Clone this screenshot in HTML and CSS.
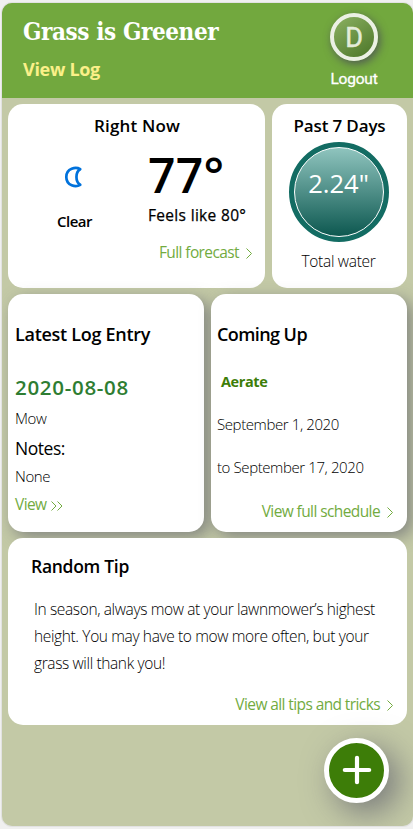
FILE: index.html
```html
<!DOCTYPE html>
<html lang="en">
<head>
<meta charset="utf-8">
<title>Grass is Greener</title>
<link rel="stylesheet" href="styles.css">
</head>
<body>
<div class="app">
  <header class="header">
    <div>
      <h1 class="brand">Grass is Greener</h1>
      <a class="view-log">View Log</a>
    </div>
    <div class="account">
      <div class="avatar">D</div>
      <a class="logout">Logout</a>
    </div>
  </header>
  <main class="main">
    <div class="row row-weather">
      <section class="card now">
        <h2 class="title title-sm">Right Now</h2>
        <div class="now-body">
          <div class="sky">
            <svg class="moon" width="18" height="22" viewBox="0 0 18 22"><path d="M16.200 3.200C12 .600 2.300 2 2.300 11s9.700 10.400 13.900 7.800C11.200 16 11.200 6 16.200 3.200Z" fill="none" stroke="#0072dc" stroke-width="2.700" stroke-linejoin="round"/></svg>
            <p class="condition">Clear</p>
          </div>
          <div class="temps">
            <p class="temp">77°</p>
            <p class="feels">Feels like 80°</p>
          </div>
        </div>
        <a class="link link-right">Full forecast<svg class="chev" width="6" height="11" viewBox="0 0 6 11"><path d="M.5 .5 5.500 5.500.5 10.500"/></svg></a>
      </section>
      <section class="card water">
        <h2 class="title title-past">Past 7 Days</h2>
        <div class="gauge"><div class="gauge-inner">2.24"</div></div>
        <p class="total">Total water</p>
      </section>
    </div>
    <div class="row row-log">
      <section class="card raised latest">
        <h2 class="title title-tight">Latest Log Entry</h2>
        <h3 class="date">2020-08-08</h3>
        <p class="text mow">Mow</p>
        <h4 class="notes">Notes:</h4>
        <p class="text none">None</p>
        <a class="link view">View<svg class="chev" width="12" height="10" viewBox="0 0 12 10"><path d="M.5 .5 5 5 .5 9.500M6.500 .5 11 5 6.500 9.500"/></svg></a>
      </section>
      <section class="card raised coming">
        <h2 class="title title-coming">Coming Up</h2>
        <h3 class="task">Aerate</h3>
        <p class="text when">September 1, 2020</p>
        <p class="text when">to September 17, 2020</p>
        <a class="link link-right schedule">View full schedule<svg class="chev" width="6" height="11" viewBox="0 0 6 11"><path d="M.5 .5 5.500 5.500.5 10.500"/></svg></a>
      </section>
    </div>
    <section class="card tip">
      <h2 class="title title-tip">Random Tip</h2>
      <p class="tip-text">In season, always mow at your lawnmower’s highest<br>height. You may have to mow more often, but your<br>grass will thank you!</p>
      <a class="link link-right tricks">View all tips and tricks<svg class="chev" width="6" height="11" viewBox="0 0 6 11"><path d="M.5 .5 5.500 5.500.5 10.500"/></svg></a>
    </section>
  </main>
  <button class="fab" aria-label="Add"><svg width="30" height="30" viewBox="0 0 30 30"><path d="M15 2.800v24.400M2.800 15h24.400" stroke="#fff" stroke-width="4.200" stroke-linecap="round"/></svg></button>
</div>
</body>
</html>
```
FILE: styles.css
```css
* { box-sizing: border-box; margin: 0; padding: 0; }
body {
  background: #f0f0f0;
  padding: 2px 0 0 1px;
  font-family: "Open Sans", "Noto Sans", sans-serif;
  color: #000;
  height: 829px;
  overflow: hidden;
}
.app {
  height: 823px;
  margin: 1px 0 0 1px;
  background: #c3c9a6;
  border-radius: 10px;
  overflow: hidden;
  box-shadow: 0 0 0 1px #e2e2e2;
}
.header {
  height: 95px;
  background: #72a83e;
  display: flex;
  justify-content: space-between;
  padding: 14px 29px 0 21px;
}
.brand {
  font: bold 24px/30px "DejaVu Serif Condensed", "DejaVu Serif", serif;
  letter-spacing: -0.4px;
  color: #fff;
}
.view-log {
  display: block;
  margin-top: 12px;
  font-size: 18px;
  line-height: 20px;
  font-weight: 700;
  letter-spacing: -0.3px;
  color: #fbf089;
}
.account {
  display: flex;
  flex-direction: column;
  align-items: center;
  width: 60px;
  margin: -4px 0 0;
}
.avatar {
  width: 48px;
  height: 48px;
  flex: none;
  border-radius: 50%;
  border: 4px solid #ebf0e4;
  background: linear-gradient(145deg, #8bb162, #4b7527);
  box-shadow: 2px 3px 9px rgba(70, 65, 90, .75);
  color: #e3ecd9;
  font: 400 27px/42px Roboto, sans-serif;
  -webkit-text-stroke: .5px #e3ecd9;
  text-align: center;
}
.logout {
  margin-top: 8px;
  font: 400 15.5px/20px Roboto, sans-serif;
  -webkit-text-stroke: .3px #fff;
  letter-spacing: -0.2px;
  color: #fff;
}
.main { padding: 6px 6px 0; display: flex; flex-direction: column; gap: 6px; }
.row { display: grid; gap: 7px; }
.row-weather { grid-template-columns: 257px 135px; height: 184px; }
.row-log { grid-template-columns: 196px 196px; height: 238px; }
.card { background: #fff; border-radius: 15px; }
.raised { box-shadow: 5px 5px 15px rgba(90, 90, 105, .6); }
.title { font-size: 18px; line-height: 20px; font-weight: 600; }
.title-sm { font-size: 17px; letter-spacing: .16px; text-align: center; }
.title-past { font-size: 17px; letter-spacing: -.14px; }
.title-tight { letter-spacing: -.29px; }
.title-coming { letter-spacing: -.58px; }
.title-tip { font-size: 17.5px; letter-spacing: -.29px; }

.now { padding: 12px 13px 0 0; }
.now .title { padding-left: 14px; }
.now-body { display: grid; grid-template-columns: 140px 1fr; height: 95px; }
.sky { display: flex; flex-direction: column; align-items: center; width: 133px; padding-top: 30px; }
.moon { display: block; margin-right: 3px; }
.condition { margin-top: 23px; font-size: 15px; line-height: 20px; font-weight: 600; letter-spacing: -.5px; }
.temps { padding-top: 14px; }
.temp { font-size: 48px; line-height: 50px; font-weight: 600; letter-spacing: .3px; }
.feels { margin-top: 5px; font-size: 15.5px; line-height: 20px; font-weight: 500; letter-spacing: .32px; white-space: nowrap; -webkit-text-stroke: .25px #000; }
.link {
  display: flex;
  align-items: center;
  gap: 7px;
  font-size: 15.5px;
  line-height: 20px;
  font-weight: 400;
  letter-spacing: -.6px;
  color: #72ab3f;
}
.link-right { justify-content: flex-end; }
.chev { fill: none; stroke: #72ab3f; stroke-width: 1; margin-top: 3px; }
.now .link { margin-top: 11px; }

.water { display: flex; flex-direction: column; align-items: center; padding-top: 12px; }
.gauge {
  width: 100px;
  height: 100px;
  flex: none;
  margin: 6px 2px 0 0;
  border-radius: 50%;
  border: 5px solid #136c63;
  background: #136c63;
}
.gauge-inner {
  height: 90px;
  border: 1px solid #fff;
  border-radius: 50%;
  background: linear-gradient(#8fc4be, #0d5850);
  color: #fff;
  font-size: 25.5px;
  line-height: 71px;
  text-align: center;
}
.total { margin: 9px 2px 0 0; font-size: 15.5px; line-height: 20px; font-weight: 300; letter-spacing: -.3px; color: #000; }

.latest { padding: 30px 7px 0; }
.date { margin-top: 33px; font-size: 20.5px; line-height: 20px; font-weight: 600; letter-spacing: .7px; color: #2e7d32; }
.text { font-size: 15px; line-height: 20px; font-weight: 300; letter-spacing: -.4px; color: #000; }
.mow { margin-top: 11px; }
.notes { margin-top: 10px; font-size: 17.5px; line-height: 20px; font-weight: 400; letter-spacing: -.45px; }
.none { margin-top: 8px; }
.view { margin-top: 8px; gap: 5px; }

.coming { padding: 30px 14px 0 6px; }
.task { margin: 28px 0 0 4px; font-size: 14.5px; line-height: 20px; font-weight: 700; letter-spacing: -.4px; color: #3d7d08; }
.when { margin-top: 23px; }
.task + .when { margin-top: 22px; }
.schedule { margin-top: 24px; }

.tip { height: 187px; padding: 18px 14px 0 23px; }
.tip-text { margin: 20px 0 0 3px; font-size: 15.5px; line-height: 27px; font-weight: 300; letter-spacing: -.37px; white-space: nowrap; color: #000; }
.tricks { margin-top: 17px; }

.fab {
  display: flex;
  align-items: center;
  justify-content: center;
  position: relative;
  width: 65px;
  height: 65px;
  margin: 12.500px 24px 0 auto;
  border: 5px solid #fff;
  border-radius: 50%;
  background: #3d7d08;
  box-shadow: 10px 10px 32px rgba(80, 80, 100, .65);
}
```
